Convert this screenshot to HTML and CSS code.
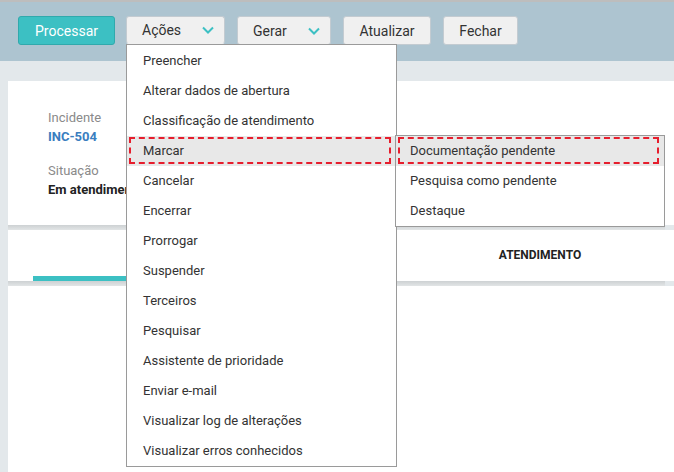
FILE: index.html
```html
<!DOCTYPE html>
<html lang="pt-BR">
<head>
  <meta charset="UTF-8" />
  <meta name="viewport" content="width=device-width, initial-scale=1.0" />
  <title>Incidente INC-504</title>
  <link rel="stylesheet" href="styles.css">
</head>
<body>

  <div class="top-line"></div>

  <div class="toolbar">
    <button class="btn btn-primary btn-process">Processar</button>

    <div class="dropdown">
      <button class="btn btn-menu btn-actions">
        <span>Ações</span>
        <svg class="chevron" width="12" height="8" viewBox="0 0 12 8"><polyline points="1,1.5 6,6.5 11,1.5" /></svg>
      </button>

      <ul class="menu">
        <li class="menu-item">Preencher</li>
        <li class="menu-item">Alterar dados de abertura</li>
        <li class="menu-item">Classificação de atendimento</li>
        <li class="menu-item active marked">Marcar
          <ul class="menu submenu">
            <li class="menu-item active marked sub-marked">Documentação pendente</li>
            <li class="menu-item">Pesquisa como pendente</li>
            <li class="menu-item">Destaque</li>
          </ul>
        </li>
        <li class="menu-item">Cancelar</li>
        <li class="menu-item">Encerrar</li>
        <li class="menu-item">Prorrogar</li>
        <li class="menu-item">Suspender</li>
        <li class="menu-item">Terceiros</li>
        <li class="menu-item">Pesquisar</li>
        <li class="menu-item">Assistente de prioridade</li>
        <li class="menu-item">Enviar e-mail</li>
        <li class="menu-item">Visualizar log de alterações</li>
        <li class="menu-item">Visualizar erros conhecidos</li>
      </ul>
    </div>

    <button class="btn btn-menu btn-generate">
      <span>Gerar</span>
      <svg class="chevron" width="12" height="8" viewBox="0 0 12 8"><polyline points="1,1.5 6,6.5 11,1.5" /></svg>
    </button>
    <button class="btn btn-refresh">Atualizar</button>
    <button class="btn btn-close">Fechar</button>
  </div>

  <div class="content">
    <div class="card card-info">
      <div class="field">
        <div class="field-label">Incidente</div>
        <div class="field-value link">INC-504</div>
      </div>
      <div class="field">
        <div class="field-label">Situação</div>
        <div class="field-value">Em atendimento</div>
      </div>
    </div>

    <div class="separator"></div>

    <div class="card card-tabs">
      <div class="tab selected"></div>
      <div class="tab">ATENDIMENTO</div>
    </div>

    <div class="separator"></div>

    <div class="card card-form">
      <div class="input"></div>
      <div class="input"></div>
    </div>
  </div>

</body>
</html>
```

FILE: styles.css
```css
body {
  margin: 0;
  padding: 0;
  background-color: #e3e8eb;
  font-family: 'Roboto', 'Liberation Sans', sans-serif;
  color: #333;
  overflow: hidden;
  height: 472px;
}

ul {
  margin: 0;
  padding: 0;
  list-style: none;
}

.top-line {
  height: 2px;
  background-color: #bdbdbd;
}

.toolbar {
  display: flex;
  align-items: flex-start;
  height: 45px;
  padding: 14px 0 0 18px;
  background-color: #adc4d0;
}

.btn {
  height: 29px;
  margin-right: 11px;
  padding: 0;
  border: 1px solid #c3cbd1;
  border-radius: 3px;
  background-color: #f0f0f0;
  font-family: inherit;
  font-size: 14px;
  color: #333;
  box-sizing: border-box;
}

.btn-primary {
  background-color: #3cc0c3;
  border-color: #30a9ac;
  color: #fff;
}

.btn-process { width: 97px; }
.btn-refresh { width: 88px; margin-left: 1px; }
.btn-close { width: 75px; margin-left: 1px; }

.btn-menu {
  display: flex;
  align-items: center;
  justify-content: space-between;
  padding: 0 10px 0 15px;
}

.btn-actions { width: 99px; height: 28px; margin-right: 0; border-bottom-color: #f0f0f0; }
.btn-generate { width: 94px; margin-left: 12px; }

.chevron polyline {
  fill: none;
  stroke: #3cc0c3;
  stroke-width: 2;
}

.dropdown {
  position: relative;
}

.menu {
  position: absolute;
  top: 28px;
  left: 0;
  width: 271px;
  padding-top: 1px;
  background-color: #fff;
  border: 1px solid #9a9a9a;
  box-sizing: border-box;
  z-index: 20;
}

.menu-item {
  position: relative;
  height: 30px;
  line-height: 30px;
  padding-left: 16px;
  font-size: 13px;
  color: #333;
  white-space: nowrap;
}

.menu-item.active {
  background-color: #e8e8e8;
}

.menu-item.marked::after {
  content: "";
  position: absolute;
  top: 1px;
  bottom: 2px;
  left: 2px;
  right: 5px;
  border: 2px dashed #e61e2d;
  pointer-events: none;
}

.submenu {
  top: -1px;
  left: 268px;
  width: 270px;
  padding: 0;
}

.submenu .menu-item {
  padding-left: 14px;
}

.sub-marked::after {
  right: 2px;
}

.content {
  margin-top: 20px;
  padding-left: 8px;
}

.card {
  background-color: #fff;
}

.card-info {
  height: 116px;
  padding: 28px 0 0 40px;
}

.field {
  margin-bottom: 16px;
  font-size: 13px;
  line-height: 18px;
}

.field-label {
  color: #8a8a8a;
}

.field-value {
  font-weight: bold;
  color: #222;
  margin-top: 1px;
}

.field-value.link {
  color: #3a7ebf;
}

.separator {
  height: 5px;
  margin-right: 9px;
  background: linear-gradient(#cdd1d3, #e2e5e6);
}

.card-tabs {
  display: flex;
  height: 51px;
  padding-left: 25px;
  overflow: hidden;
}

.tab {
  display: flex;
  flex-shrink: 0;
  align-items: center;
  justify-content: center;
  box-sizing: border-box;
  font-size: 12px;
  font-weight: bold;
  color: #222;
}

.tab.selected {
  width: 340px;
  border-bottom: 5px solid #3cc0c3;
}

.tab:last-child {
  width: 334px;
  padding-bottom: 2px;
}

.card-form {
  height: 89px;
  padding: 98px 0 0 150px;
}

.input {
  width: 237px;
  height: 20px;
  margin-bottom: 32px;
  border: 1px solid #ececec;
}
```
